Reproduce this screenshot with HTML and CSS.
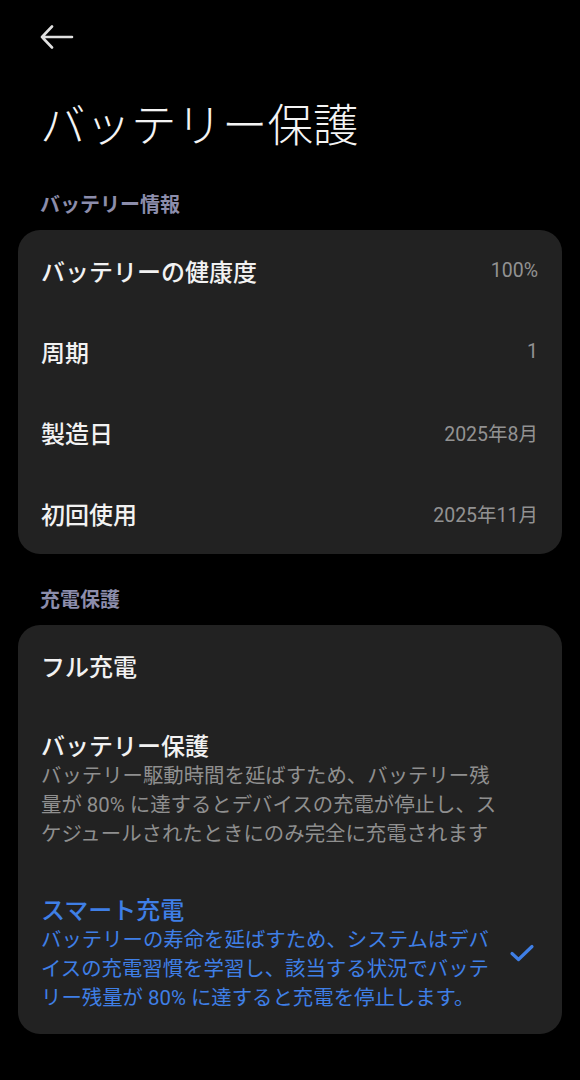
FILE: index.html
```html
<!DOCTYPE html>
<html lang="ja">
<head>
  <meta charset="UTF-8" />
  <meta name="viewport" content="width=device-width, initial-scale=1" />
  <title>バッテリー保護</title>
  <link rel="stylesheet" href="styles.css">
</head>
<body>
  <div class="top-bar">
    <button class="back-btn" aria-label="戻る">
      <svg width="34" height="24" viewBox="0 0 34 24">
        <path d="M2 12 H32 M12 1.5 L2 12 L12 22.5" fill="none" stroke="#e0e0e0" stroke-width="2.6" stroke-linecap="round" stroke-linejoin="round" />
      </svg>
    </button>
  </div>

  <h1 class="page-title">バッテリー保護</h1>

  <div class="section-label">バッテリー情報</div>
  <div class="card">
    <div class="info-row">
      <span class="row-label">バッテリーの健康度</span>
      <span class="row-value">100%</span>
    </div>
    <div class="info-row">
      <span class="row-label">周期</span>
      <span class="row-value">1</span>
    </div>
    <div class="info-row">
      <span class="row-label">製造日</span>
      <span class="row-value">2025年8月</span>
    </div>
    <div class="info-row">
      <span class="row-label">初回使用</span>
      <span class="row-value">2025年11月</span>
    </div>
  </div>

  <div class="section-label section-label-second">充電保護</div>
  <div class="card">
    <div class="option option-single">
      <div class="option-text">
        <div class="option-title">フル充電</div>
      </div>
    </div>
    <div class="option">
      <div class="option-text">
        <div class="option-title">バッテリー保護</div>
        <div class="option-desc">バッテリー駆動時間を延ばすため、バッテリー残量が 80% に達するとデバイスの充電が停止し、スケジュールされたときにのみ完全に充電されます</div>
      </div>
    </div>
    <div class="option option-selected">
      <div class="option-text">
        <div class="option-title">スマート充電</div>
        <div class="option-desc">バッテリーの寿命を延ばすため、システムはデバイスの充電習慣を学習し、該当する状況でバッテリー残量が 80% に達すると充電を停止します。</div>
      </div>
      <svg class="check" width="26" height="20" viewBox="0 0 26 20">
        <path d="M3 10.5 L9.5 16.5 L23 3.5" fill="none" stroke="#3f7fe6" stroke-width="3.2" stroke-linecap="round" stroke-linejoin="round" />
      </svg>
    </div>
  </div>
</body>
</html>
```

FILE: styles.css
```css
/* Base */
body {
  margin: 0;
  padding: 0 18px 40px;
  background-color: #000;
  color: #f2f2f2;
  font-family: Roboto, "Noto Sans CJK JP", sans-serif;
}

/* Top bar */
.top-bar {
  height: 74px;
  display: flex;
  align-items: center;
}

.back-btn {
  margin-left: 22px;
  padding: 0;
  background: none;
  border: none;
  display: flex;
  cursor: pointer;
}

.page-title {
  margin: 18px 0 0 22px;
  font-size: 45.5px;
  line-height: 60px;
  font-weight: 300;
  font-family: "Noto Sans CJK JP", sans-serif;
  color: #f4f4f4;
}

/* Section headers */
.section-label {
  margin: 38px 0 12px 22px;
  font-size: 20px;
  line-height: 28px;
  font-weight: 700;
  font-family: "Noto Sans CJK JP", sans-serif;
  color: #8c8dab;
}

.section-label-second {
  margin-top: 31px;
}

/* Cards */
.card {
  background-color: #222222;
  border-radius: 22px;
  overflow: hidden;
}

.info-row {
  height: 81px;
  padding: 0 24px 0 23px;
  display: flex;
  align-items: center;
  justify-content: space-between;
}

.row-label {
  font-size: 24px;
  font-weight: 500;
  font-family: "Noto Sans CJK JP", sans-serif;
}

.row-value {
  font-size: 19.5px;
  color: #929292;
}

/* Charging options */
.option {
  padding: 22px 27px 21px 23px;
  display: flex;
  align-items: center;
  justify-content: space-between;
}

.option-single {
  height: 81px;
  padding-top: 0;
  padding-bottom: 0;
  box-sizing: border-box;
}

.option-title {
  font-size: 24px;
  line-height: 34px;
  font-weight: 500;
  font-family: "Noto Sans CJK JP", sans-serif;
}

.option-desc {
  max-width: 460px;
  font-size: 20.4px;
  line-height: 29px;
  color: #8f8f8f;
}

.option-selected {
  padding-bottom: 21px;
}

.option-selected .option-title {
  color: #3f7fe6;
}

.option-selected .option-desc {
  max-width: 452px;
  color: #3f7fe6;
}

.check {
  flex-shrink: 0;
}
```
